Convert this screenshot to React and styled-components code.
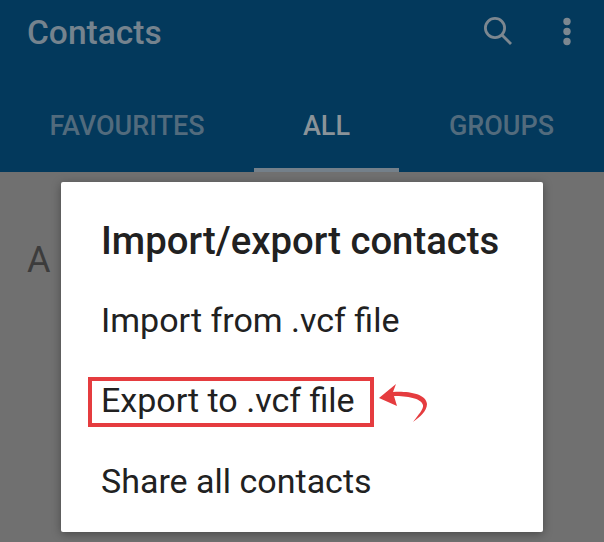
import styled, { createGlobalStyle } from "styled-components"

const GlobalStyle = createGlobalStyle`
  html, body {
    margin: 0;
    padding: 0;
    background: #707070;
  }
  body {
    font-family: Roboto, "Liberation Sans", sans-serif;
  }
`

const Screen = styled.div`
  position: relative;
  width: 604px;
  height: 542px;
  overflow: hidden;
  background: #707070;
`

const AppBar = styled.header`
  height: 172px;
  background: #03395c;
  display: flex;
  flex-direction: column;
`

const TopRow = styled.div`
  height: 88px;
  padding: 0 32px 0 27px;
  box-sizing: border-box;
  display: flex;
  align-items: flex-start;
  justify-content: space-between;
`

const Title = styled.h1`
  margin: 13px 0 0;
  font-size: 33.5px;
  line-height: 40px;
  font-weight: 500;
  color: #75838e;
`

const Actions = styled.div`
  display: flex;
  align-items: center;
  gap: 50px;
  margin-top: 17px;
  color: #7c8790;
`

const Tabs = styled.nav`
  flex: 1;
  display: grid;
  grid-template-columns: 254px 145px 205px;
`

const Tab = styled.div`
  display: flex;
  align-items: center;
  justify-content: center;
  padding-bottom: 5px;
  font-size: 27px;
  font-weight: 500;
  color: ${props => (props.$active ? "#8a9399" : "#526b7d")};
  border-bottom: 4px solid ${props => (props.$active ? "#74808a" : "transparent")};
`

const Letter = styled.div`
  padding: 67px 0 0 27px;
  font-size: 36px;
  color: #3c3c3c;
`

const Dialog = styled.section`
  position: absolute;
  left: 61px;
  top: 182px;
  width: 482px;
  height: 350px;
  background: #fff;
  border-radius: 2px;
  box-shadow: 0 2px 10px rgba(0, 0, 0, 0.35);
  padding: 37px 0 0 40px;
  box-sizing: border-box;
  color: #212121;
`

const DialogTitle = styled.h2`
  margin: 0 0 35px;
  font-size: 38.3px;
  line-height: 44px;
  font-weight: 500;
`

const Option = styled.div`
  height: 44px;
  font-size: 34px;
  line-height: 44px;
`

const HighlightRow = styled.div`
  display: flex;
  align-items: center;
  margin: 35px 0 32px -13px;
`

const Highlight = styled.div`
  width: 286px;
  height: 50px;
  box-sizing: border-box;
  border: 4px solid #e53c3f;
  padding-left: 9px;
  font-size: 34px;
  line-height: 38px;
`

const Arrow = styled.svg`
  margin-left: 5px;
  flex-shrink: 0;
`

function SearchIcon() {
  return (
    <svg width="30" height="29" viewBox="0 0 30 29" fill="none" stroke="currentColor" strokeWidth="2.8">
      <circle cx="13" cy="11" r="9.6" />
      <path d="M20 18 L29 27" />
    </svg>
  )
}

function MoreIcon() {
  return (
    <svg width="10" height="29" viewBox="0 0 10 29" fill="currentColor">
      <circle cx="5" cy="4.5" r="3.7" />
      <circle cx="5" cy="14.5" r="3.7" />
      <circle cx="5" cy="24.5" r="3.7" />
    </svg>
  )
}

function App() {
  return (
    <Screen>
      <GlobalStyle />
      <AppBar>
        <TopRow>
          <Title>Contacts</Title>
          <Actions>
            <SearchIcon />
            <MoreIcon />
          </Actions>
        </TopRow>
        <Tabs>
          <Tab>FAVOURITES</Tab>
          <Tab $active>ALL</Tab>
          <Tab>GROUPS</Tab>
        </Tabs>
      </AppBar>
      <Letter>A</Letter>
      <Dialog>
        <DialogTitle>Import/export contacts</DialogTitle>
        <Option>Import from .vcf file</Option>
        <HighlightRow>
          <Highlight>Export to .vcf file</Highlight>
          <Arrow width="50" height="42" viewBox="0 0 50 42" fill="none">
            <path d="M0 17 L17 3 L14 11 C27 10 47 12 48 23 C48 30 41 36 34 41 C39 34 45 28 44 24 C42 17 28 15 15 15 L18 25 Z" fill="#e53c3f" />
          </Arrow>
        </HighlightRow>
        <Option>Share all contacts</Option>
      </Dialog>
    </Screen>
  )
}

export default App
